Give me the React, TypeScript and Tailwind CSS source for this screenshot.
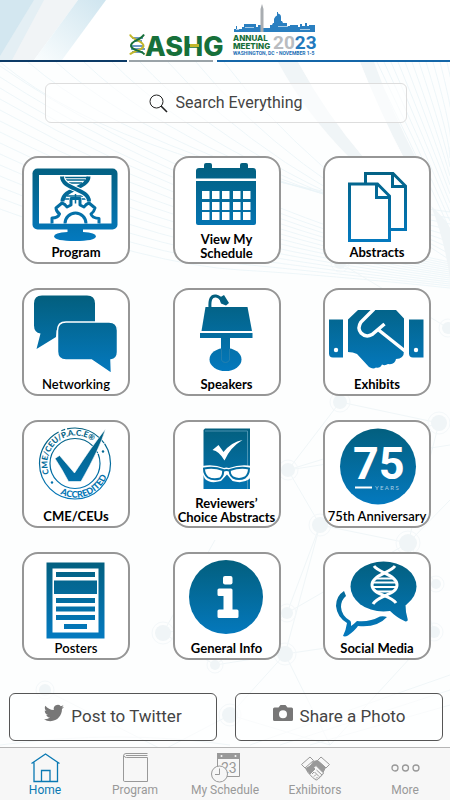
import type { ReactNode } from "react";
import clsx from "clsx";

const BLUE = "url(#tile-blue)";

type Tile = {
	label: string[];
	icon: ReactNode;
	medium?: boolean;
};

function ProgramIcon() {
	return (
		<>
			<rect x="10.5" y="12.5" width="85" height="61" rx="5" fill={BLUE} />
			<rect x="17" y="19" width="72.5" height="48.5" fill="#fff" />
			<path d="M45.5 73h15.5v3q13 .5 13 4.500-1 4.500-21 4.500t-21-4.500q0-4 13.500-4.500z" fill={BLUE} />
			<g fill="none" stroke={BLUE}>
				<path d="M41 21.500h25M44 24h19M47 27h13M45 40h16M42 43h5M60 43h5M53.500 38v4" strokeWidth="1.500" />
				<path d="M66.500 20.500c0 12-26 12-26 25" strokeWidth="4" />
				<path d="M40 20.500c0 13 27 12 27 25" stroke="#fff" strokeWidth="6" />
				<path d="M40 20.500c0 13 27 12 27 25" strokeWidth="4" />
				<path
					d="M30 67.500v-5.500q6 0 7.500-4-3.500-3-3.500-6l6-5q3 1 5 4l4-2v-6.500h9v6.500l4 2q2-3 5-4l6 5q-1 4-4 6 1 4 8 4.500v5"
					fill="#fff"
					strokeWidth="3"
					strokeLinejoin="round"
				/>
				<path d="M43 67.500a10.500 10.500 0 0 1 21 0" strokeWidth="3" />
				<path d="M49 42.500v6M53.500 42.500v5M58 42.500v6" strokeWidth="1.500" />
			</g>
		</>
	);
}

function CalendarIcon() {
	const cols = [29, 39, 49, 60, 70];
	const rows = [35, 46, 56];
	return (
		<>
			<path d="M26 12h5V9q0-2 2-2h4q2 0 2 2v3h28V9q0-2 2-2h4q2 0 2 2v3h5q3 0 3 3v7.500H23V15q0-3 3-3z" fill={BLUE} />
			<path d="M23 25h60v42q0 2-2 2H25q-2 0-2-2z" fill={BLUE} />
			{rows.map((y) =>
				cols.map((x) => (
					<rect key={`${x}-${y}`} x={x} y={y} width="7.500" height="8" fill="#fff" />
				)),
			)}
		</>
	);
}

function AbstractsIcon() {
	return (
		<g fill="none" stroke={BLUE} strokeWidth="3">
			<path d="M42.500 28V17.500H70L82.500 30v43.500H67" />
			<path d="M69.500 17.500V30.500h13" />
			<path d="M26.500 28h28L66.500 40v44.500h-40z" />
			<path d="M53.500 28v13.500h13" />
		</g>
	);
}

function NetworkingIcon() {
	return (
		<>
			<path d="M20 7.500h45q8 0 8 8V34H42q-8 2-8 15L14.500 61l4-15.500q-6.500-1-6.500-8V15.500q0-8 8-8z" fill={BLUE} />
			<path
				d="M44 34h43q8.500 0 8.500 8.500V64q0 7-6.500 8l.5 13.500L69.500 72H44q-8.500 0-8.500-8.500V42.500q0-8.500 8.500-8.500z"
				fill={BLUE}
				stroke="#fff"
				strokeWidth="1.500"
			/>
		</>
	);
}

function SpeakersIcon() {
	return (
		<>
			<path d="M37 20q-1-13 6-12 4 .5 7 6" fill="none" stroke={BLUE} strokeWidth="3" />
			<path d="M46 10l5-3 5 8-3 2.500-5-2z" fill={BLUE} />
			<path d="M32.500 19h42L79 43H28.500z" fill={BLUE} />
			<path d="M27 45h52.500v5H27z" fill={BLUE} />
			<ellipse cx="52.500" cy="71.500" rx="16" ry="11.500" fill={BLUE} />
			<path d="M48 50h9v22q-1 3-4.500 3T48 72z" fill={BLUE} />
			<path d="M48.500 61v11q1 2.500 4 2.500t4-2.500V61" fill="none" stroke="#2f83ae" strokeWidth=".7" />
		</>
	);
}

function ExhibitsIcon() {
	return (
		<>
			<path d="M6 31.500h14v38H10q-4 0-4-4zM86 31.500h14.500v38h-10.500q-4 0-4-4z" fill={BLUE} />
			<circle cx="13" cy="62" r="2.200" fill="#fff" />
			<circle cx="93" cy="62" r="2.200" fill="#fff" />
			<path
				d="M25 31.500L35 22h38l8 8.500V63q0 8-8 8-1 6-8 5-3 2-6 .5-2 4-6 3-3 2-7-.5L34 66q-4-2-9-2z"
				fill={BLUE}
			/>
			<path
				d="M51 21L38 34q-4 6 0 11 5 5 11 1.500L61.500 36M55 41.500L82 63"
				fill="none"
				stroke="#fff"
				strokeWidth="3.500"
			/>
		</>
	);
}

function AccreditedIcon() {
	return (
		<>
			<circle cx="53" cy="43.500" r="35.500" fill="none" stroke={BLUE} strokeWidth="1.200" strokeDasharray="150 3 4 2" />
			<circle cx="53" cy="43.500" r="25" fill="none" stroke={BLUE} strokeWidth="1.200" />
			<path id="seal-top" d="M27 53.500A28 28 0 0 1 80 34" fill="none" />
			<path id="seal-bottom" d="M38 74A34 34 0 0 0 87 40" fill="none" />
			<g fill={BLUE} className="font-['Lato'] font-black">
				<text fontSize="8">
					<textPath href="#seal-top">CME/CEU/P.A.C.E®</textPath>
				</text>
				<text fontSize="9">
					<textPath href="#seal-bottom">ACCREDITED</textPath>
				</text>
			</g>
			<circle cx="30" cy="62.500" r="1.200" fill={BLUE} />
			<circle cx="81" cy="31.500" r="1.200" fill={BLUE} />
			<path d="M33 38.500l4.500-3L52.500 53Q70 26 83.500 9 78 28 59 61.500H46.500Q40 49 33 38.500z" fill={BLUE} stroke="#fff" strokeWidth=".6" />
			<path d="M78 26l5-3M75 31l4-2M74 34l4-1" stroke="#fff" strokeWidth=".8" />
		</>
	);
}

function ReviewersIcon() {
	return (
		<>
			<path d="M32 8.500h45V69H30.500V10z" fill={BLUE} />
			<path d="M32 11h42.500v58" fill="none" stroke="#5d9fbd" strokeWidth=".8" />
			<path d="M39.500 30l6-5 5 7q8-10 19-12-12 7-18 20.500Q46 31 39.500 30z" fill="#fff" />
			<path
				d="M29 46q12-2 22 2 2-1 5 0 11-4 23-2l.5 4-3 9q-7 5-17 2l-5.500-6.500L48 61q-11 3-16-2-3-5-3.500-9z"
				fill="#fff"
			/>
			<g fill="none" stroke={BLUE} strokeWidth="2">
				<path d="M31 48.500q10-2 19 1.500 1 5-3 8.500-7 2-12-1-4-3-4-9z" />
				<path d="M57 50q10-3.500 19-1.500 0 6-4 9-6 3-12 0-4-3-3-7.500z" />
				<path d="M50 51q3.500-2 7 0" />
			</g>
		</>
	);
}

function AnniversaryIcon() {
	return (
		<>
			<circle cx="55" cy="46.500" r="38" fill={BLUE} />
			<text x="30" y="59" fill="#fff" fontSize="45" className="font-['Roboto'] font-bold">
				75
			</text>
			<path d="M32 67.500h17" stroke="#fff" strokeWidth="2" />
			<text x="52" y="69.500" fill="#a9cde2" fontSize="6" className="font-['Lato']">
				Y E A R S
			</text>
		</>
	);
}

function PostersIcon() {
	return (
		<>
			<path d="M24.500 10.500h58V86.500h-58z" fill={BLUE} />
			<path d="M30.500 16.500h46v64h-46z" fill="#fff" />
			<path
				d="M34 20h39v5H34zM32 28.500h43V42H32zM34 46h39v5H34zM34 54.500h39v5H34zM34 63h39v5H34zM42 72h23v5H42z"
				fill={BLUE}
			/>
		</>
	);
}

function InfoIcon() {
	return (
		<>
			<circle cx="53" cy="45" r="37" fill={BLUE} />
			<rect x="50" y="24" width="9.500" height="8.500" rx="2" fill="#fff" />
			<path
				d="M46 36.500h12q1.500 0 1.500 1.500v19.500H64q1.500 0 1.500 1.500v5.500q0 1.500-1.500 1.500H46q-1.500 0-1.500-1.500V59q0-1.500 1.500-1.500h4.500V44H46q-1.500 0-1.500-1.500V38q0-1.500 1.500-1.500z"
				fill="#fff"
			/>
		</>
	);
}

function SocialIcon() {
	return (
		<>
			<path
				d="M21 39q-8 5-8 15 1 11 11 17-1 7-4 13 2 1 5-.5 7-5 10-9.500 19 2 29-9-3-1-7-.5-11 6-23 4.500-3 3-6 5 .5-3-.5-5-9-5-9.500-14Q18 48 23 44z"
				fill={BLUE}
			/>
			<ellipse cx="60.500" cy="34.500" rx="33" ry="25" fill={BLUE} />
			<path d="M66 58q8 8 16.500 11.500 3 0 2-3-2-6-2-14z" fill={BLUE} />
			<g fill="none" stroke="#fff">
				<path d="M51 14c5 7 23 9 23 19S55 43 50 52" strokeWidth="3" />
				<path d="M72 14c-5 7-23 9-23 19s19 10 24 18" strokeWidth="3" />
				<path d="M53 26.500h17M50 30.500h23M50 35h23M53 39.500h17" strokeWidth="2" />
			</g>
		</>
	);
}

const TILES: Tile[] = [
	{ label: ["Program"], icon: <ProgramIcon /> },
	{ label: ["View My", "Schedule"], icon: <CalendarIcon /> },
	{ label: ["Abstracts"], icon: <AbstractsIcon /> },
	{ label: ["Networking"], icon: <NetworkingIcon />, medium: true },
	{ label: ["Speakers"], icon: <SpeakersIcon /> },
	{ label: ["Exhibits"], icon: <ExhibitsIcon /> },
	{ label: ["CME/CEUs"], icon: <AccreditedIcon /> },
	{ label: ["Reviewers’", "Choice Abstracts"], icon: <ReviewersIcon /> },
	{ label: ["75th Anniversary"], icon: <AnniversaryIcon />, medium: true },
	{ label: ["Posters"], icon: <PostersIcon />, medium: true },
	{ label: ["General Info"], icon: <InfoIcon /> },
	{ label: ["Social Media"], icon: <SocialIcon /> },
];

function TileLink({ tile }: { tile: Tile }) {
	const tall = tile.label.length > 1;
	return (
		<a
			href="#"
			className="flex h-[108px] w-[108px] flex-col items-center rounded-2xl border-2 border-[#969696] bg-white"
		>
			<svg
				viewBox={tall ? "2 2 104 74" : "2 2 104 86"}
				className={clsx("w-full shrink-0 overflow-visible", tall ? "h-[74px]" : "h-[86px]")}
				aria-hidden="true"
			>
				{tile.icon}
			</svg>
			<span
				className={clsx(
					"text-center font-['Lato',sans-serif] text-[13px] whitespace-nowrap text-black",
					tall ? "leading-[14px]" : "leading-4",
					tile.medium ? "font-semibold" : "font-bold",
				)}
			>
				{tile.label.map((line) => (
					<span key={line} className="block">
						{line}
					</span>
				))}
			</span>
		</a>
	);
}

function Logo() {
	return (
		<svg
			viewBox="126 0 194 60"
			className="ml-[126px] h-[60px] w-[194px] overflow-visible"
			role="img"
			aria-label="ASHG Annual Meeting 2023"
		>
			{/* helix */}
			<g fill="none">
				<path d="M132 38h11M134 41h8M132 46h12M131 49h14M132 52h11" stroke="#3e77b6" strokeWidth="1.300" />
				<path d="M130 34.500c2 6 14 6 13.500 11.500-1 5-11.500 5-13.500 8.500" stroke="#c3b72b" strokeWidth="2" />
				<path d="M144 34.500c-3 6-13.500 6-13 11.500 1 5 11 4 13.500 8.500" stroke="#17703a" strokeWidth="2" />
			</g>
			<text x="145" y="55.500" fontSize="27" fill="#17703a" className="font-['Inter'] font-extrabold">
				ASHG
			</text>
			<path d="M190 44h9v3h-9z" fill="#c3b72b" />
			{/* skyline */}
			<path
				d="M234 32v-3h2v-3h1v3h5v-2h2v-3h12v3h2v-2h3v3h9v-3h2l1-2h1v-4q1-3 3-3.500V12h1v1.500q3 .5 3 3.500v4h1l1 2h4v3h3v-1h8v2h2v-3h2v2h3v-3h2v3h2v-1h6v7z"
				fill="#2a7fc0"
			/>
			<path d="M236 29h3v1h-3zM245 27h9v1h-9zM278 26h10v1h-10zM300 29h10v1h-10z" fill="#a8cbe6" />
			<path d="M260.500 32V9L262 4l1.500 5v23z" fill="#a9adb1" />
			<text x="233" y="41" fontSize="8" fill="#17703a" className="font-['Inter'] font-extrabold">
				ANNUAL
			</text>
			<text x="233" y="48.500" fontSize="8" fill="#17703a" className="font-['Inter'] font-extrabold">
				MEETING
			</text>
			<text x="233" y="55" fontSize="5" fill="#1c6fb5" className="font-['Roboto'] font-bold">
				WASHINGTON, DC • NOVEMBER 1-5
			</text>
			<text x="273" y="48.500" fontSize="19" fill="#b9bcc0" className="font-['Roboto'] font-bold">
				20<tspan fill="#2279bd">23</tspan>
			</text>
		</svg>
	);
}

const NODES = [
	[340, 263, 6],
	[448, 328, 6],
	[340, 402, 7],
	[439, 423, 8],
	[288, 470, 7],
	[320, 525, 8],
	[408, 543, 9],
	[287, 613, 6],
	[285, 654, 8],
	[163, 633, 8],
	[215, 665, 5],
	[434, 632, 6],
	[436, 584, 5],
	[45, 690, 6],
	[230, 715, 8],
];

function Backdrop() {
	return (
		<svg
			viewBox="0 0 450 800"
			preserveAspectRatio="none"
			className="absolute inset-0 -z-10 h-full w-full"
			aria-hidden="true"
		>
			<defs>
				<linearGradient id="tile-blue" gradientUnits="userSpaceOnUse" x1="0" y1="8" x2="0" y2="84">
					<stop offset="0" stopColor="#035f7e" />
					<stop offset="1" stopColor="#0479be" />
				</linearGradient>
			</defs>
			<g fill="none" stroke="#eaf4f7" strokeWidth=".8">
				{Array.from({ length: 14 }, (_, i) => (
					<path key={i} d={`M0 ${66 + i * 11}Q${100 + i * 4} ${135 + i * 10} 240 ${192 + i * 6}T450 ${262 + i * 2}`} />
				))}
				{Array.from({ length: 9 }, (_, i) => (
					<path key={i} d={`M${i * 28} 62Q${130 + i * 22} 170 450 ${212 + i * 6}`} />
				))}
				{Array.from({ length: 14 }, (_, i) => (
					<path key={i} d={`M${370 + i * 7} 62Q${410 + i * 5} 140 450 ${230 - i * 9}`} />
				))}
			</g>
			<path d="M278 62h20q30 52 66 96h-14q-44-44-72-96zM360 62h14q18 50 42 96h-12q-26-46-44-96z" fill="#f0f5f7" />
			<path d="M298 62h62q20 50 44 96h-40q-38-44-66-96z" fill="#fff" />
			<path d="M431 206q14 12 19 22v50q-6-40-19-72z" fill="#f0f5f7" />
			<g fill="none" stroke="#f0f6f8" strokeWidth="1">
				<path d="M340 263L448 328M340 402L439 423L408 543L320 525L288 470L450 445M288 470L439 423M340 402L288 470M320 525L285 654L434 632L408 543M287 613L408 543M287 613L163 633M285 654L215 665L163 633L215 540M215 665L287 613L320 525M436 584L408 543L450 500M285 654L230 715L163 750M230 715L330 745L285 654M434 632L330 745M45 690L163 750" />
				<path d="M0 745q120-16 230 0M250 745l200-70M280 745l170-55M310 745l140-40" />
			</g>
			{NODES.map(([cx, cy, r]) => (
				<g key={`${cx}-${cy}`}>
					<circle cx={cx} cy={cy} r={r} fill="#f0f5f7" />
					<circle cx={cx} cy={cy} r={r + 3} fill="none" stroke="#f4f8fa" />
				</g>
			))}
		</svg>
	);
}

function Header() {
	return (
		<header className="bg-white">
			<div className="relative isolate h-[60px]">
				<svg viewBox="0 0 110 60" className="absolute top-0 left-0 -z-10 h-[60px] w-[110px]" aria-hidden="true">
					<defs>
						<linearGradient id="band" x1="0" y1="1" x2="1" y2="0">
							<stop offset="0" stopColor="#fafdfe" />
							<stop offset="1" stopColor="#cfe5ef" />
						</linearGradient>
					</defs>
					<path d="M0 0h38L0 60z" fill="#d3e7f0" />
					<path d="M38 0h40L34 60H0z" fill="#f1f4f6" />
					<path d="M78 0h28L62 60H34z" fill="url(#band)" />
					<path d="M34 0h10L12 60H0v-4z" fill="#e4eff4" />
				</svg>
				<Logo />
			</div>
			<div className="flex h-0.5">
				<div className="w-[127px] bg-[#0c3a66]" />
				<div className="mx-0.5 w-[84px] bg-[#9aa3a8]" />
				<div className="ml-0.5 flex-1 bg-[#1466a8]" />
			</div>
		</header>
	);
}

function SearchIcon() {
	return (
		<svg viewBox="0 0 19 19" className="h-[19px] w-[19px]" fill="none" stroke="#222" aria-hidden="true">
			<circle cx="7.500" cy="7.500" r="6.500" />
			<path d="M12 12l6 6" strokeWidth="1.600" />
		</svg>
	);
}

function TwitterIcon() {
	return (
		<svg viewBox="0 0 24 24" className="mb-2 h-5 w-5" fill="#777" aria-hidden="true">
			<path d="M23.950 4.570a10 10 0 0 1-2.820.77 4.960 4.960 0 0 0 2.160-2.720c-.95.55-2 .95-3.130 1.180a4.920 4.920 0 0 0-8.380 4.480C7.690 8.090 4.070 6.130 1.640 3.160a4.820 4.820 0 0 0-.67 2.480c0 1.710.87 3.210 2.190 4.100a4.900 4.900 0 0 1-2.230-.62v.06a4.920 4.920 0 0 0 3.950 4.830 5 5 0 0 1-2.210.08 4.940 4.940 0 0 0 4.600 3.420A9.870 9.870 0 0 1 0 19.540a14 14 0 0 0 7.550 2.210c9.050 0 14-7.500 14-13.980 0-.21 0-.42-.02-.63a9.940 9.940 0 0 0 2.460-2.550z" />
		</svg>
	);
}

function CameraIcon() {
	return (
		<svg viewBox="0 0 20 20" className="mb-2 h-5 w-5" fill="#777" aria-hidden="true">
			<path
				fillRule="evenodd"
				d="M5.500 4.500L7.500 2h5l2 2.500h4Q20 4.500 20 6v10.500q0 1.500-1.500 1.500h-17Q0 18 0 16.500V6q0-1.500 1.500-1.500zM10 7.200a4 4 0 1 0 0 8 4 4 0 0 0 0-8z"
			/>
		</svg>
	);
}

const TABS = [
	{
		label: "Home",
		icon: (
			<g strokeWidth="1.300">
				<path d="M.5 10.500L14.500 1l14 9.500M3 9.500v19h23.500v-19" />
				<path d="M10.500 28.500V17.500h8.500v11" />
			</g>
		),
	},
	{
		label: "Program",
		icon: (
			<path d="M26.500 28.500h-23Q2.500 28.500 2.500 27V3Q2.500.5 5 .5h21.500M26.500 4.500v24M26.500 4.500H5.500q-2 0-2.500-1.500M5 2.500h21.500" />
		),
	},
	{
		label: "My Schedule",
		icon: (
			<>
				<path d="M6.500.5h22v23h-22z" />
				<path d="M6 0h23v6H6z" fill="currentColor" stroke="none" />
				<circle cx="10.500" cy="3" r="1" fill="#f7f7f7" stroke="none" />
				<circle cx="24.500" cy="3" r="1" fill="#f7f7f7" stroke="none" />
				<text x="10" y="19.500" fontSize="14" fill="currentColor" stroke="none" className="font-['Roboto']">
					23
				</text>
				<circle cx="8.500" cy="21" r="8" fill="#f7f7f7" />
				<path d="M8.500 15.500v6H4" />
			</>
		),
	},
	{
		label: "Exhibitors",
		icon: (
			<>
				<path d="M.5 11.500L9 4l3.500 3.500L4 15zM28.500 11.500L20 4l-3.500 3.500L25 15z" />
				<path d="M12.500 8.500l4-1 8 7-2.500 5-7-7-3.500 3-2.500-2z" fill="currentColor" />
				<path d="M4.500 15l2.500 4.500q5 6 8 7.500 2 0 2-1.500 2 0 2-2 2 0 2-2 1.500 0 1.500-2" />
				<path d="M5 15.500l4 5.500 5-5-4-3.500z" fill="currentColor" />
				<path d="M11 21l2-2M13 23.500l2-2M15 25.500l1.500-1.500M15.500 17l5.500 5M13.500 19l4.500 4.500" />
			</>
		),
	},
	{
		label: "More",
		icon: (
			<g strokeWidth="1.300">
				<circle cx="4" cy="15" r="3" />
				<circle cx="14.500" cy="15" r="3" />
				<circle cx="25" cy="15" r="3" />
			</g>
		),
	},
];

export default function App() {
	return (
		<div className="relative isolate flex min-h-screen flex-col bg-[#fdfefe] font-['Roboto',sans-serif]">
			<Backdrop />
			<Header />

			<main>
				<label className="mr-[43px] ml-[45px] mt-[21px] flex h-10 items-center justify-center gap-2 rounded-md border border-[#ddd] bg-white/60 pl-4">
					<SearchIcon />
					<input
						type="text"
						aria-label="Search Everything"
						placeholder="Search Everything"
						className="w-36 bg-transparent text-base text-[#333] outline-none placeholder:text-[#444]"
					/>
				</label>

				<div className="mt-[33px] grid grid-cols-[repeat(3,108px)] justify-between gap-y-6 pr-[19px] pl-[22px]">
					{TILES.map((tile) => (
						<TileLink key={tile.label[0]} tile={tile} />
					))}
				</div>

				<div className="mt-[33px] mb-1.5 grid grid-cols-2 gap-[18px] pr-[7px] pl-[9px] text-[17px] text-[#444]">
					<button
						type="button"
						className="flex h-12 items-center justify-center gap-[7px] rounded-md border border-[#555] bg-white/60"
					>
						<TwitterIcon />
						Post to Twitter
					</button>
					<button
						type="button"
						className="flex h-12 items-center justify-center gap-[7px] rounded-md border border-[#555] bg-white/60"
					>
						<CameraIcon />
						Share a Photo
					</button>
				</div>
			</main>

			<nav className="mt-auto grid grid-cols-5 border-t border-[#b5b5b5] bg-[#f7f7f7] pt-[5px]">
				{TABS.map((tab, i) => (
					<a
						key={tab.label}
						href="#"
						aria-current={i === 0 ? "page" : undefined}
						className={clsx(
							"flex flex-col items-center pb-0.5 text-xs",
							i === 0 ? "text-[#0a79b3]" : "text-[#999]",
						)}
					>
						<svg
							viewBox="0 0 29 29"
							className="h-[29px] w-[29px] overflow-visible"
							fill="none"
							stroke="currentColor"
							aria-hidden="true"
						>
							{tab.icon}
						</svg>
						{tab.label}
					</a>
				))}
			</nav>
		</div>
	);
}
